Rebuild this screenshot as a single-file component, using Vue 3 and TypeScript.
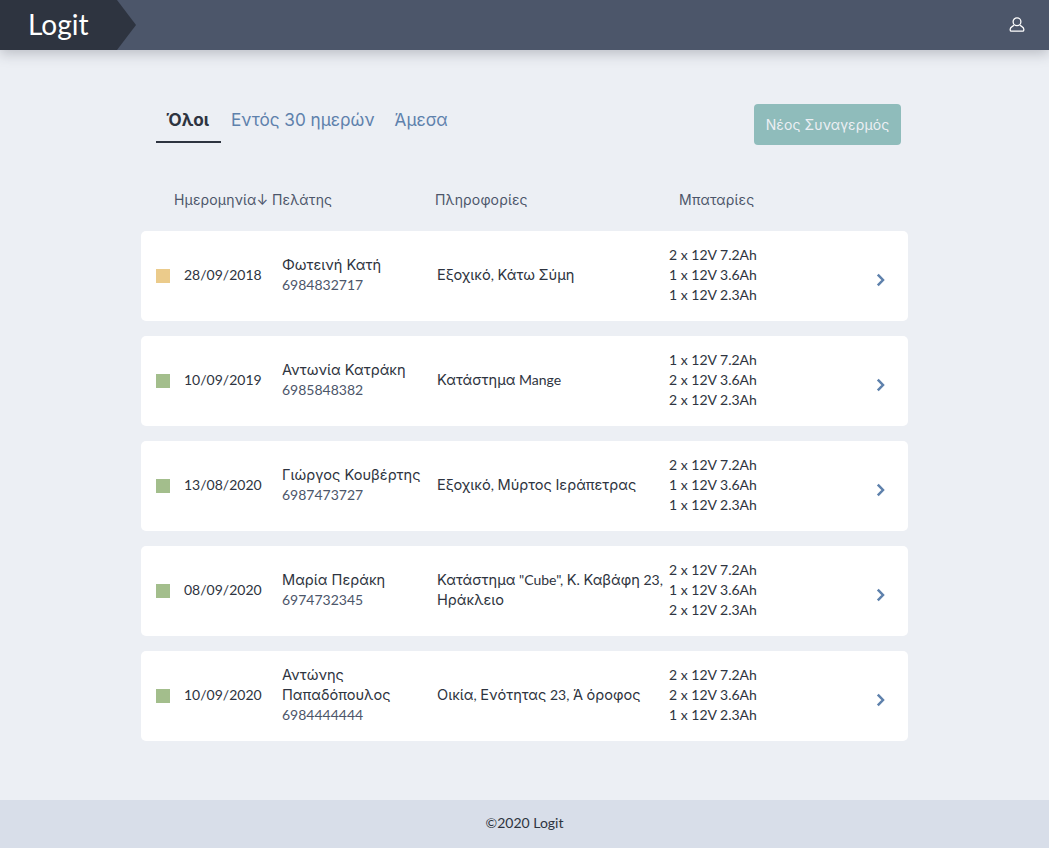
<script setup lang="ts">
interface Row {
  color: string
  date: string
  name: string
  phone: string
  info: string
  batteries: string[]
}
interface Seg {
  text: string
  greek: boolean
}
const green = '#a3be8c'
const rows: Row[] = [
  { color: '#ebcb8b', date: '28/09/2018', name: 'Φωτεινή Κατή', phone: '6984832717', info: 'Εξοχικό, Κάτω Σύμη', batteries: ['2 x 12V 7.2Ah', '1 x 12V 3.6Ah', '1 x 12V 2.3Ah'] },
  { color: green, date: '10/09/2019', name: 'Αντωνία Κατράκη', phone: '6985848382', info: 'Κατάστημα Mange', batteries: ['1 x 12V 7.2Ah', '2 x 12V 3.6Ah', '2 x 12V 2.3Ah'] },
  { color: green, date: '13/08/2020', name: 'Γιώργος Κουβέρτης', phone: '6987473727', info: 'Εξοχικό, Μύρτος Ιεράπετρας', batteries: ['2 x 12V 7.2Ah', '1 x 12V 3.6Ah', '1 x 12V 2.3Ah'] },
  { color: green, date: '08/09/2020', name: 'Μαρία Περάκη', phone: '6974732345', info: 'Κατάστημα "Cube", Κ. Καβάφη 23, Ηράκλειο', batteries: ['2 x 12V 7.2Ah', '1 x 12V 3.6Ah', '2 x 12V 2.3Ah'] },
  { color: green, date: '10/09/2020', name: 'Αντώνης Παπαδόπουλος', phone: '6984444444', info: 'Οικία, Ενότητας 23, Ά όροφος', batteries: ['2 x 12V 7.2Ah', '2 x 12V 3.6Ah', '1 x 12V 2.3Ah'] },
]
// Greek runs use a different family from the Latin text and digits around them.
function segments(text: string): Seg[] {
  return text
    .split(/([\u0370-\u03ff\u1f00-\u1fff]+)/)
    .filter((t) => t.length > 0)
    .map((t) => ({ text: t, greek: /[\u0370-\u03ff\u1f00-\u1fff]/.test(t) }))
}
</script>

<template>
  <div class="page">
    <header class="topbar">
      <div class="brand">Logit</div>
      <svg class="user" width="16" height="16" viewBox="0 0 16 16" fill="none" stroke="#fff" stroke-width="1.3">
        <circle cx="8" cy="4.8" r="3.9" />
        <path d="M5 8.2 L3 9.6 Q1.2 10.6 1.2 12.2 V13 a1.2 1.2 0 0 0 1.2 1.2 H13.6 a1.2 1.2 0 0 0 1.2 -1.2 V12.2 Q14.8 10.6 13 9.6 L11 8.2" />
      </svg>
    </header>

    <main class="content">
      <div class="toolbar">
        <nav class="tabs">
          <a class="tab active">Όλοι</a>
          <a class="tab">Εντός 30 ημερών</a>
          <a class="tab">Άμεσα</a>
        </nav>
        <button class="primary" type="button">Νέος Συναγερμός</button>
      </div>

      <div class="heads">
        <span class="h-date">Ημερομηνία↓</span>
        <span class="h-client">Πελάτης</span>
        <span class="h-info">Πληροφορίες</span>
        <span class="h-bat">Μπαταρίες</span>
      </div>

      <div class="list">
        <article v-for="row in rows" :key="row.phone" class="card">
          <span class="swatch" :style="{ background: row.color }"></span>
          <span class="date">{{ row.date }}</span>
          <div class="client">
            <div class="gr">{{ row.name }}</div>
            <div class="phone">{{ row.phone }}</div>
          </div>
          <div class="info">
            <span v-for="(s, i) in segments(row.info)" :key="i" :class="{ gr: s.greek }">{{ s.text }}</span>
          </div>
          <div class="batteries">
            <div v-for="b in row.batteries" :key="b">{{ b }}</div>
          </div>
          <svg class="chev" width="10" height="14" viewBox="0 0 10 14" fill="none" stroke="#5e81ac" stroke-width="2.5">
            <path d="M1.8 1.6 L7 7 L1.8 12.4" />
          </svg>
        </article>
      </div>
    </main>

    <footer class="foot">©2020 Logit</footer>
  </div>
</template>

<style>
html, body { margin: 0; background: #eceff4; }
</style>

<style scoped>
.page {
  height: 848px;
  display: flex;
  flex-direction: column;
  background: #eceff4;
  color: #2e3440;
  font-family: Lato, Inter, sans-serif;
  font-size: 14px;
  line-height: 20px;
}
.topbar {
  height: 50px;
  flex: none;
  display: flex;
  align-items: center;
  justify-content: space-between;
  background: #4c566a;
  box-shadow: 0 4px 12px rgba(46, 52, 64, 0.25);
  position: relative;
}
.brand {
  width: 117px;
  height: 50px;
  box-sizing: border-box;
  padding-left: 28px;
  background: #2e3440;
  color: #fff;
  font-size: 28px;
  line-height: 48px;
  position: relative;
}
.brand::after {
  content: "";
  position: absolute;
  left: 100%;
  top: 0;
  border-left: 19px solid #2e3440;
  border-top: 25px solid transparent;
  border-bottom: 25px solid transparent;
}
.user { margin-right: 24px; }
.content {
  flex: 1;
  width: 767px;
  margin-left: 141px;
}
.toolbar {
  box-sizing: border-box;
  height: 95px;
  display: flex;
  justify-content: space-between;
  align-items: flex-start;
  padding: 54px 7px 0 15px;
}
.tabs { display: flex; }
.tab {
  height: 39px;
  box-sizing: border-box;
  padding: 4px 10px 0;
  font-family: Inter, sans-serif;
  font-size: 17.2px;
  line-height: 24px;
  color: #5e81ac;
  border-bottom: 2px solid transparent;
}
.tab.active {
  width: 65px;
  font-weight: 700;
  color: #2e3440;
  border-bottom-color: #2e3440;
}
.primary {
  width: 147px;
  height: 41px;
  border: 0;
  border-radius: 4px;
  background: #8fbcbb;
  color: #eceff4;
  font-family: Inter, sans-serif;
  font-size: 14px;
  letter-spacing: 0.1px;
  padding: 0;
}
.heads {
  height: 86px;
  box-sizing: border-box;
  padding-top: 45px;
  display: flex;
  color: #4c566a;
  font-family: Inter, sans-serif;
  font-size: 14px;
  letter-spacing: 0.15px;
}
.h-date { margin-left: 33px; width: 98px; white-space: nowrap; }
.h-client { width: 163px; }
.h-info { width: 244px; }
.list { display: flex; flex-direction: column; gap: 15px; }
.card {
  height: 90px;
  background: #fff;
  border-radius: 5px;
  display: flex;
  align-items: center;
}
.gr { font-family: Inter, sans-serif; font-size: 14.6px; }
.swatch { width: 14px; height: 14px; margin-left: 15px; flex: none; }
.date { width: 98px; margin-left: 14px; flex: none; margin-top: -2px; }
.client { width: 155px; flex: none; margin-top: -2px; }
.phone { color: #4c566a; }
.info { width: 232px; flex: none; margin-top: -2px; }
.batteries { width: 207px; flex: none; margin-top: -2px; }
.chev { flex: none; margin-top: 8px; }
.foot {
  height: 48px;
  flex: none;
  background: #d8dee9;
  text-align: center;
  line-height: 46px;
}
</style>
